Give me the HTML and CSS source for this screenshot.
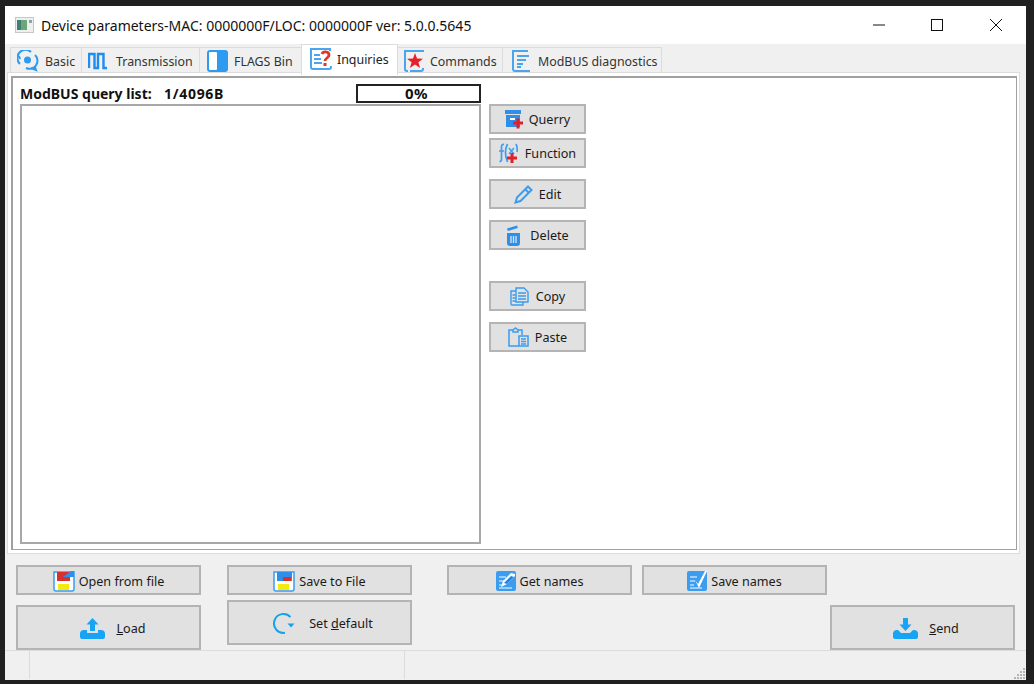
FILE: index.html
```html
<!DOCTYPE html>
<html lang="en">
<head>
    <meta charset="UTF-8">
    <title>Device parameters</title>
    <link rel="stylesheet" href="styles.css">
</head>
<body>
    <div class="window">
        <div class="titlebar">
            <svg class="app-icon" width="19" height="16" viewBox="0 0 19 16"><rect width="19" height="16" fill="#c4c8c8"/><rect x="1" y="1" width="17" height="14" fill="#eef0f0"/><rect x="2" y="3" width="10" height="10" fill="#3f7f78"/><rect x="6" y="3" width="6" height="10" fill="#6aa878"/><rect x="14" y="3" width="3" height="3" fill="#8fa0a8"/></svg>
            <span class="title">Device parameters-MAC: 0000000F/LOC: 0000000F ver: 5.0.0.5645</span>
            <div class="win-controls">
                <svg width="58" height="38" viewBox="0 0 58 38"><path d="M22 19h12" stroke="#111" fill="none"/></svg>
                <svg width="58" height="38" viewBox="0 0 58 38"><rect x="22.500" y="13.500" width="11" height="11" stroke="#111" fill="none"/></svg>
                <svg width="58" height="38" viewBox="0 0 58 38"><path d="M23 13l12 12M35 13l-12 12" stroke="#111" fill="none"/></svg>
            </div>
        </div>

        <div class="tabs">
            <div class="tab t-basic">
                <svg width="22" height="22" viewBox="0 0 22 22" fill="none" stroke="#2f9bf0" stroke-width="2"><path d="M3 14a8 8 0 0 1 11-12"/><path d="M18 5a8 8 0 0 1-9 13"/><circle cx="10.500" cy="10" r="3.500" fill="#2f9bf0" stroke="none"/><path d="M14 18l5 2-1-3M2 6l1 3"/></svg>
                Basic
            </div>
            <div class="tab t-trans">
                <svg width="20" height="20" viewBox="0 0 20 20" fill="none" stroke="#1f8cf0" stroke-width="2.400"><path d="M1 17V3h5.500v14h3.500V3h5.500v14H19"/></svg>
                Transmission
            </div>
            <div class="tab t-flags">
                <svg width="21" height="22" viewBox="0 0 21 22"><rect x="0" y="0" width="21" height="22" rx="3" fill="#2f9bf0"/><rect x="2" y="2" width="8" height="18" rx="1" fill="#fff"/></svg>
                FLAGS Bin
            </div>
            <div class="tab active t-inq">
                <svg width="22" height="22" viewBox="0 0 22 22" fill="none"><path d="M20 3V1H1v18a2 2 0 0 0 2 2h16a2 2 0 0 0 2-2v-1" stroke="#4aa5f0" stroke-width="2"/><path d="M4 7h6M4 11h7M4 15h8" stroke="#4aa5f0" stroke-width="1.800"/><path d="M12 6c1-3 7-3 7 1 0 3-4 3-4 6" stroke="#e0352a" stroke-width="2.800"/><rect x="13.500" y="15" width="3" height="3" fill="#e0352a"/></svg>
                Inquiries
            </div>
            <div class="tab t-cmd">
                <svg width="20" height="22" viewBox="0 0 20 22" fill="none"><path d="M19 2V1H1v18a2 2 0 0 0 2 2h1" stroke="#4aa5f0" stroke-width="2"/><path d="M6 21h11a2 2 0 0 0 2-2v-1" stroke="#4aa5f0" stroke-width="2"/><path d="M11 3l2 5.500 6 .2-4.600 3.600 1.700 5.700-5.100-3.400-5.100 3.400 1.700-5.700L3 8.700l6-.2z" fill="#e8202a"/></svg>
                Commands
            </div>
            <div class="tab t-diag">
                <svg width="19" height="22" viewBox="0 0 19 22" fill="none" stroke="#4aa5f0" stroke-width="2"><path d="M16 1H1v18a2 2 0 0 0 2 2h15"/><path d="M5 6h12M5 10h9M5 14h6M5 17h4"/></svg>
                ModBUS diagnostics
            </div>
        </div>

        <div class="tab-frame">
            <div class="tab-panel">
                <div class="list-col">
                    <div class="list-head">
                        <span class="list-label">ModBUS query list:</span>
                        <span class="list-size">1/4096B</span>
                        <div class="progress">0%</div>
                    </div>
                    <div class="query-list"></div>
                </div>
                <div class="side-buttons">
                    <button class="btn side">
                        <svg width="18" height="19" viewBox="0 0 18 19"><rect x="0" y="0" width="16" height="4" fill="#2f8fe8"/><rect x="1" y="5" width="14" height="12" fill="#2f8fe8"/><rect x="5" y="8" width="5" height="2" fill="#fff"/><path d="M8 13h10M13 8.500v10" stroke="#e0202a" stroke-width="3"/></svg>
                        Querry
                    </button>
                    <button class="btn side">
                        <svg width="20" height="21" viewBox="0 0 20 21" fill="none"><path d="M5 1.500c-2-.5-2.500 1-2.500 2.500v12c0 2-1 2.500-2 2.500M0 8h5" stroke="#3f9cf0" stroke-width="1.700"/><path d="M8.500 1c-2.500 5-2.500 12 0 18M17 1c1.500 3 1.500 5 1 8" stroke="#3f9cf0" stroke-width="1.700"/><path d="M10 5l5 6M15 5l-5 6" stroke="#3f9cf0" stroke-width="1.500"/><path d="M8 15h10M13 10v10" stroke="#e0202a" stroke-width="3"/></svg>
                        Function
                    </button>
                    <button class="btn side gap-s">
                        <svg width="19" height="19" viewBox="0 0 19 19" fill="none" stroke="#3b9cf0" stroke-width="2"><path d="M14 1.500l3.500 3.500L6.500 16 1.500 17.500 3 12.500z"/><path d="M11.500 4.500l3 3"/></svg>
                        Edit
                    </button>
                    <button class="btn side gap-s">
                        <svg class="icon-delete" width="15" height="21" viewBox="0 0 15 21"><path d="M1 3.500L11 .5l.8 2.500-10 3z" fill="#2f8fe8"/><path d="M1 8h13v10a3 3 0 0 1-3 3H4a3 3 0 0 1-3-3z" fill="#2f8fe8"/><path d="M5 11v7M7.500 11v7M10 11v7" stroke="#e2e2e2" stroke-width="1.300"/></svg>
                        Delete
                    </button>
                    <button class="btn side gap-l">
                        <svg width="20" height="19" viewBox="0 0 20 19" fill="none" stroke="#3b9cf0" stroke-width="1.400"><path d="M6 4H1v13a1 1 0 0 0 1 1h11v-3"/><path d="M6 1h8l4 4v10H6z" fill="#e2e2e2"/><path d="M2.500 8h3M2.500 11h3M2.500 14h3M8 6h8M8 9h8M8 12h8"/></svg>
                        Copy
                    </button>
                    <button class="btn side gap-s">
                        <svg width="21" height="20" viewBox="0 0 21 20" fill="none" stroke="#3b9cf0" stroke-width="1.500"><path d="M5 3H1v16h10"/><path d="M10 3h4v5"/><path d="M5 5V3l2.500-2L10 3v2z"/><rect x="11" y="9" width="9" height="10" fill="#e2e2e2"/><path d="M13 12h5M13 14.500h5M13 17h5"/></svg>
                        Paste
                    </button>
                </div>
            </div>
        </div>

        <div class="bottom-buttons">
            <div class="btn-col col-a">
                <button class="btn small">
                    <svg width="22" height="22" viewBox="0 0 22 22"><path d="M1 2h20v17a2 2 0 0 1-2 2H3a2 2 0 0 1-2-2z" fill="#fff" stroke="#3b9cf0" stroke-width="1.500"/><path d="M4 2h13v9H4z" fill="#d83030"/><path d="M10 7l8-6h3v6z" fill="#2f8fe8"/><rect x="5" y="14" width="11" height="6" fill="#f5ea10"/></svg>
                    Open from file
                </button>
                <button class="btn big load-btn">
                    <svg width="25" height="21" viewBox="0 0 25 21"><path d="M12.500 0l6 6.500h-3.500V13h-5V6.500H6.500z" fill="#18a4f5"/><path d="M0 15a4 4 0 0 1 4-3h3v3h11v-3h3a4 4 0 0 1 4 3v4a2 2 0 0 1-2 2H2a2 2 0 0 1-2-2z" fill="#18a4f5"/></svg>
                    <span><u>L</u>oad</span>
                </button>
            </div>
            <div class="btn-col col-b">
                <button class="btn small">
                    <svg width="22" height="22" viewBox="0 0 22 22"><path d="M1 2h20v17a2 2 0 0 1-2 2H3a2 2 0 0 1-2-2z" fill="#fff" stroke="#3b9cf0" stroke-width="1.500"/><path d="M4 2h15v9H4z" fill="#2f8fe8"/><path d="M10 11V7h8v4z" fill="#d83030"/><rect x="5" y="14" width="11" height="6" fill="#f5ea10"/></svg>
                    Save to File
                </button>
                <button class="btn big default-btn">
                    <svg width="23" height="23" viewBox="0 0 23 23" fill="none"><path d="M18.500 5A9.500 9.500 0 1 0 13 20.800" stroke="#18a0e8" stroke-width="2"/><path d="M15.500 11.500h7l-3.500 4z" fill="#18a0e8"/></svg>
                    <span>Set <u>d</u>efault</span>
                </button>
            </div>
            <div class="btn-col col-c">
                <button class="btn small">
                    <svg width="20" height="20" viewBox="0 0 20 20"><rect width="20" height="20" rx="2" fill="#3b9cf0"/><path d="M3 6h7M3 10h5M3 14h3M3 17h13" stroke="#fff"/><path d="M5 16l2-6 8-8 4 1v2l-8 8z" fill="#fff"/><path d="M8 12l7-7 3 1-7 7z" fill="#1f86e8"/></svg>
                    Get names
                </button>
            </div>
            <div class="btn-col col-d">
                <button class="btn small">
                    <svg width="20" height="20" viewBox="0 0 20 20"><rect width="20" height="20" rx="2" fill="#3b9cf0"/><path d="M3 6h7M3 10h5M3 14h4M3 17h12" stroke="#fff"/><path d="M8 9l3 4 7-13h2L12 17z" fill="#fff"/></svg>
                    Save names
                </button>
            </div>
            <div class="btn-col col-e">
                <button class="btn big send-btn">
                    <svg width="25" height="21" viewBox="0 0 25 21"><path d="M10 0h5v6.500h3.500l-6 6.500-6-6.500H10z" fill="#18a4f5"/><path d="M0 15a4 4 0 0 1 4-3h1l3 3h9l3-3h1a4 4 0 0 1 4 3v4a2 2 0 0 1-2 2H2a2 2 0 0 1-2-2z" fill="#18a4f5"/></svg>
                    <span><u>S</u>end</span>
                </button>
            </div>
        </div>

        <div class="statusbar">
            <div class="status-cell first"></div>
            <div class="status-cell second"></div>
            <div class="status-cell"></div>
            <svg class="grip" width="12" height="12" viewBox="0 0 12 12" fill="#b4b4b4"><rect x="9" y="1" width="2" height="2"/><rect x="6" y="4" width="2" height="2"/><rect x="9" y="4" width="2" height="2"/><rect x="3" y="7" width="2" height="2"/><rect x="6" y="7" width="2" height="2"/><rect x="9" y="7" width="2" height="2"/><rect x="0" y="10" width="2" height="2"/><rect x="3" y="10" width="2" height="2"/><rect x="6" y="10" width="2" height="2"/><rect x="9" y="10" width="2" height="2"/></svg>
        </div>
    </div>
</body>
</html>
```

FILE: styles.css
```css
* {
    margin: 0;
    padding: 0;
    box-sizing: border-box;
    font-family: 'Noto Sans', 'Open Sans', sans-serif;
}

html, body {
    height: 100%;
    overflow: hidden;
}

body {
    background: #202020;
    padding: 6px 8px 4px 5px;
}

.window {
    width: 1021px;
    height: 674px;
    background: #f0f0f0;
    display: flex;
    flex-direction: column;
    color: #1a1a1a;
    font-size: 12.4px;
}

.titlebar {
    height: 38px;
    flex: none;
    background: #fff;
    display: flex;
    align-items: center;
    padding-left: 10px;
}

.app-icon {
    margin-right: 7px;
}

.title {
    font-size: 14px;
    color: #111;
    flex: 1;
}

.win-controls {
    display: flex;
    margin-right: 1px;
}

.tabs {
    height: 28px;
    flex: none;
    display: flex;
    align-items: flex-end;
    padding-left: 5px;
    position: relative;
    z-index: 1;
}

.tab {
    height: 25px;
    display: flex;
    align-items: center;
    background: #f0f0f0;
    border: 1px solid #dcdcdc;
    border-bottom: none;
    margin-left: -1px;
    padding-top: 2px;
    white-space: nowrap;
    color: #333;
}

.tab.active {
    height: 31px;
    margin-bottom: -3px;
    background: #fff;
    color: #222;
    padding-bottom: 4px;
}

.t-basic { width: 72px; margin-left: 0; padding-left: 6px; gap: 6px; }
.t-trans { width: 119px; padding-left: 6px; gap: 8px; }
.t-flags { width: 103px; padding-left: 7px; gap: 6px; }
.t-inq { width: 97px; padding-left: 8px; gap: 5px; }
.t-cmd { width: 106px; padding-left: 6px; gap: 6px; }
.t-diag { width: 160px; padding-left: 9px; gap: 7px; }

.tab-frame {
    width: 1013px;
    height: 482px;
    flex: none;
    margin-left: 2px;
    padding: 3px 2px 3px 3px;
    background: #fff;
    border: 1px solid #dcdcdc;
}

.tab-panel {
    height: 100%;
    border: 2px solid #a0a0a0;
    border-bottom-width: 1px;
    border-right-width: 1px;
    background: #fff;
    display: flex;
    padding: 5px 0 5px 7px;
}

.list-col {
    width: 461px;
    flex: none;
    display: flex;
    flex-direction: column;
}

.list-head {
    height: 21px;
    flex: none;
    display: flex;
    align-items: center;
    font-weight: 700;
    font-size: 14px;
    color: #111;
}

.list-label {
    width: 144px;
}

.list-size {
    width: 192px;
    letter-spacing: 0.7px;
}

.progress {
    width: 125px;
    height: 19px;
    border: 2px solid #222;
    text-align: center;
    font-size: 15px;
    line-height: 14px;
    letter-spacing: 0.5px;
    padding-right: 4px;
}

.query-list {
    flex: 1;
    border: 2px solid #a8a8a8;
    background: #fff;
}

.side-buttons {
    margin: 21px 0 0 8px;
    display: flex;
    flex-direction: column;
    gap: 4px;
    align-items: flex-start;
}

.btn {
    display: flex;
    align-items: center;
    justify-content: center;
    background: #e1e1e1;
    border: 2px solid #b4b4b4;
    font-size: 12.6px;
    color: #1a1a1a;
}

.side {
    width: 97px;
    height: 30px;
    gap: 6px;
}

.gap-s {
    margin-top: 7px;
}

.gap-l {
    margin-top: 27px;
}

.icon-delete {
    margin-right: 3px;
}

.bottom-buttons {
    flex: 1;
    display: flex;
    padding-left: 11px;
    padding-top: 11px;
}

.btn-col {
    width: 185px;
    flex: none;
    display: flex;
    flex-direction: column;
}

.col-b { margin-left: 26px; }
.col-c { margin-left: 35px; }
.col-d { margin-left: 10px; }
.col-e { margin-left: 3px; padding-top: 40px; }

.small {
    height: 30px;
    gap: 4px;
    padding-top: 2px;
}

.big {
    height: 45px;
    gap: 11px;
    padding-left: 9px;
    padding-top: 2px;
}

.load-btn {
    margin-top: 10px;
}

.send-btn {
    padding-left: 7px;
}

.default-btn {
    margin-top: 5px;
    gap: 14px;
    padding-left: 6px;
}

.statusbar {
    height: 30px;
    flex: none;
    display: flex;
    position: relative;
    border-top: 1px solid #dcdcdc;
}

.status-cell {
    border-right: 1px solid #dcdcdc;
    height: 28px;
}

.status-cell.first { width: 25px; }
.status-cell.second { width: 375px; }
.status-cell:last-of-type { border-right: none; }

.grip {
    position: absolute;
    right: 0;
    bottom: 1px;
}
```
